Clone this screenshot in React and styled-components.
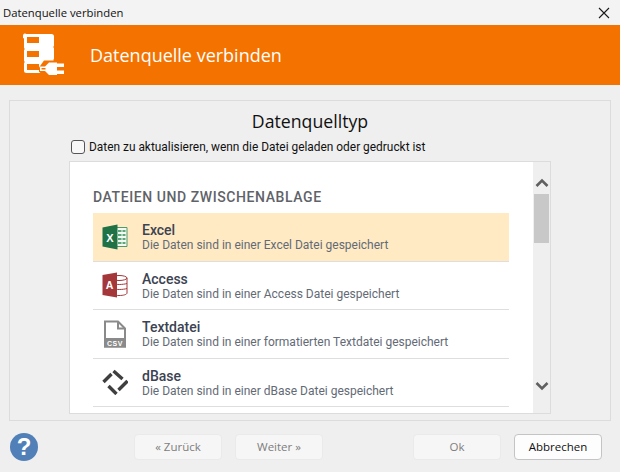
import React from 'react';
import styled, { createGlobalStyle } from 'styled-components';

const GlobalStyle = createGlobalStyle`
  html, body { margin: 0; padding: 0; }
  body { background: #efefef; font-family: Roboto, "Noto Sans", sans-serif; overflow: hidden; }
`;

const sources = [
  { id: 'excel', title: 'Excel', text: 'Die Daten sind in einer Excel Datei gespeichert', selected: true },
  { id: 'access', title: 'Access', text: 'Die Daten sind in einer Access Datei gespeichert' },
  { id: 'text', title: 'Textdatei', text: 'Die Daten sind in einer formatierten Textdatei gespeichert' },
  { id: 'dbase', title: 'dBase', text: 'Die Daten sind in einer dBase Datei gespeichert' },
];

const ExcelIcon = () => (
  <svg width="26" height="26" viewBox="0 0 26 26">
    <path d="M13 3.500h12V22.500H13z" fill="#f4f8f2" stroke="#4f9a6c" />
    <path d="M16 6h3.500v2H16zM20.500 6h3v2h-3zM16 10h3.500v2H16zM20.500 10h3v2h-3zM16 14h3.500v2H16zM20.500 14h3v2h-3zM16 18h3.500v2H16zM20.500 18h3v2h-3z" fill="#5aa77a" />
    <path d="M.5 3.500 15.500 .5v25L.5 22.500z" fill="#1f7246" />
    <text x="8" y="17.500" fill="#fff" fontFamily="Liberation Sans, sans-serif" fontSize="11" fontWeight="700" textAnchor="middle">X</text>
  </svg>
);

const AccessIcon = () => (
  <svg width="26" height="26" viewBox="0 0 26 26">
    <ellipse cx="17" cy="6" rx="8" ry="2.500" fill="#fff" stroke="#a4373a" />
    <path d="M9 6v15c0 1.500 3.500 2.500 8 2.500s8-1 8-2.500V6M11 11.500c2 1.300 10 1.300 14 0M11 16.500c2 1.300 10 1.300 14 0" fill="none" stroke="#a4373a" />
    <path d="M.5 3 15 .5v25L.5 23z" fill="#a4373a" />
    <text x="7.500" y="17" fill="#fff" fontFamily="Liberation Sans, sans-serif" fontSize="10.500" fontWeight="700" textAnchor="middle">A</text>
  </svg>
);

const CsvIcon = () => (
  <svg width="24" height="28" viewBox="0 0 24 28">
    <path d="M2 1.500h13l7 7V26.500H2z" fill="#fff" stroke="#8a8a8a" strokeWidth="2" />
    <path d="M15 1.500v7h7" fill="none" stroke="#8a8a8a" strokeWidth="2" />
    <path d="M1 18h22v9.500H1z" fill="#8a8a8a" />
    <text x="12" y="25.500" fill="#fff" fontFamily="Liberation Sans, sans-serif" fontSize="7" fontWeight="700" letterSpacing=".6" textAnchor="middle">CSV</text>
  </svg>
);

const DbaseIcon = () => (
  <svg width="26" height="26" viewBox="0 0 26 26">
    <path d="M1.500 13 9.500 5M11.500 2 20.500 10M25.500 12 16.500 21M6.500 17 14.500 25" stroke="#3f3f3f" strokeWidth="3.400" fill="none" />
  </svg>
);

const PlugLogo = () => (
  <svg width="44" height="44" viewBox="0 0 44 44">
    <path
      d="M3.500 1h25A2.500 2.500 0 0 1 31 3.500v9a2 2 0 0 1-1 1.500 2 2 0 0 1 1 1.500v10a2 2 0 0 1-1 1.500 2 2 0 0 1 1 1.500V40H3.500A2.500 2.500 0 0 1 1 37.500v-7a2 2 0 0 1 1-1.500 2 2 0 0 1-1-1.500v-10a2 2 0 0 1 1-1.500 2 2 0 0 1-1-1.500v-9A2.500 2.500 0 0 1 3.500 1z"
      fill="#fff"
    />
    <path d="M4 4h12v6H4zM4 18h12v6H4zM4 31h12v6H4z" fill="#f47300" />
    <path d="M16 34.500 21 27.500h16V44H21l-5-5.500z" fill="#f47300" />
    <path d="M17 33.500h5l4-4h8V42h-8l-4-4h-5zM18.500 35v1.500h4v-1.500z" fill="#fff" fillRule="evenodd" />
    <path d="M34 30.500h7v3.500h-7zM34 37.500h7V41h-7z" fill="#fff" />
  </svg>
);

const icons = { excel: <ExcelIcon />, access: <AccessIcon />, text: <CsvIcon />, dbase: <DbaseIcon /> };

const App = () => (
  <>
    <GlobalStyle />
    <Dialog>
      <TitleBar>
        <span>Datenquelle verbinden</span>
        <svg width="12" height="12" viewBox="0 0 12 12">
          <path d="M1 1l10 10M11 1 1 11" stroke="#1a1a1a" strokeWidth="1.100" fill="none" />
        </svg>
      </TitleBar>
      <Banner>
        <PlugLogo />
        <BannerTitle>Datenquelle verbinden</BannerTitle>
      </Banner>
      <Panel>
        <PanelTitle>Datenquelltyp</PanelTitle>
        <CheckRow>
          <CheckBox />
          <span>Daten zu aktualisieren, wenn die Datei geladen oder gedruckt ist</span>
        </CheckRow>
        <ListFrame>
          <ListBody>
            <SectionHead>DATEIEN UND ZWISCHENABLAGE</SectionHead>
            {sources.map((s) => (
              <SourceRow key={s.id} $selected={s.selected}>
                <IconCell>{icons[s.id]}</IconCell>
                <div>
                  <SourceTitle>{s.title}</SourceTitle>
                  <SourceText>{s.text}</SourceText>
                </div>
              </SourceRow>
            ))}
          </ListBody>
          <ScrollBar>
            <svg width="14" height="10" viewBox="0 0 14 10">
              <path d="M1.500 8 7 2.500 12.500 8" fill="none" stroke="#606060" strokeWidth="2.600" />
            </svg>
            <Thumb />
            <svg width="14" height="10" viewBox="0 0 14 10">
              <path d="M1.500 2 7 7.500 12.500 2" fill="none" stroke="#606060" strokeWidth="2.600" />
            </svg>
          </ScrollBar>
        </ListFrame>
      </Panel>
      <Footer>
        <HelpBadge>?</HelpBadge>
        <NavButtons>
          <Button disabled>« Zurück</Button>
          <Button disabled>Weiter »</Button>
        </NavButtons>
        <ActionButtons>
          <Button disabled>Ok</Button>
          <Button>Abbrechen</Button>
        </ActionButtons>
      </Footer>
    </Dialog>
  </>
);

const Dialog = styled.div`
  width: 620px;
  height: 472px;
  display: flex;
  flex-direction: column;
  background: #efefef;
`;

const TitleBar = styled.div`
  height: 25px;
  display: flex;
  align-items: center;
  justify-content: space-between;
  padding: 0 10px 0 3px;
  background: #f3f3f3;
  color: #111;
  font-family: "Open Sans", "Noto Sans", sans-serif;
  font-size: 11.3px;
`;

const Banner = styled.div`
  height: 60px;
  display: flex;
  align-items: center;
  gap: 23px;
  padding-left: 23px;
  background: #f47300;
`;

const BannerTitle = styled.div`
  color: #fff;
  font-family: "Open Sans", "Noto Sans", sans-serif;
  font-size: 18px;
`;

const Panel = styled.div`
  width: 602px;
  height: 321px;
  box-sizing: border-box;
  margin: 15px 0 0 9px;
  display: flex;
  flex-direction: column;
  align-items: center;
  border: 1px solid #dcdcdc;
`;

const PanelTitle = styled.div`
  margin-top: 8px;
  height: 24px;
  line-height: 24px;
  color: #111;
  font-family: "Open Sans", "Noto Sans", sans-serif;
  font-size: 17.7px;
`;

const CheckRow = styled.label`
  width: 480px;
  height: 18px;
  margin-top: 5px;
  display: flex;
  align-items: center;
  gap: 4px;
  color: #111;
  font-family: Roboto, sans-serif;
  font-size: 11.9px;
  padding-left: 2px;
`;

const CheckBox = styled.span`
  width: 12px;
  height: 12px;
  border: 1px solid #555;
  border-radius: 3px;
  background: #f8f8f8;
`;

const ListFrame = styled.div`
  width: 482px;
  height: 253px;
  box-sizing: border-box;
  margin-top: 5px;
  display: flex;
  border: 1px solid #dcdcdc;
  background: #fff;
`;

const ListBody = styled.div`
  flex: 1;
  padding: 0 24px 0 23px;
  overflow: hidden;
`;

const SectionHead = styled.div`
  height: 51px;
  box-sizing: border-box;
  padding-top: 27px;
  line-height: 16px;
  color: #5f6368;
  font-size: 14px;
  font-weight: 500;
  letter-spacing: 0.58px;
`;

const SourceRow = styled.div`
  height: 48.5px;
  box-sizing: border-box;
  display: flex;
  align-items: center;
  border-bottom: 1.500px solid #dedede;
  background: ${(p) => (p.$selected ? '#ffeac4' : 'transparent')};
`;

const IconCell = styled.div`
  width: 49px;
  display: flex;
  justify-content: center;
  padding-right: 6px;
  box-sizing: border-box;
`;

const SourceTitle = styled.div`
  color: #3c4352;
  font-size: 14px;
  font-weight: 500;
  line-height: 16px;
  margin-top: 2px;
`;

const SourceText = styled.div`
  color: #636a76;
  font-size: 12px;
  line-height: 15px;
`;

const ScrollBar = styled.div`
  width: 17px;
  display: flex;
  flex-direction: column;
  align-items: center;
  padding-top: 16px;
  background: #efefef;
`;

const Thumb = styled.div`
  width: 15px;
  height: 49px;
  margin: 6px 0 138px;
  background: #c8c8c8;
`;

const Footer = styled.div`
  flex: 1;
  display: flex;
  align-items: center;
  padding: 0 18px 0 10px;
  justify-content: space-between;
`;

const HelpBadge = styled.div`
  width: 28px;
  height: 28px;
  border-radius: 50%;
  display: flex;
  align-items: center;
  justify-content: center;
  background: #5180b8;
  color: #fff;
  font-family: "Liberation Sans", sans-serif;
  font-size: 24px;
  font-weight: 700;
`;

const NavButtons = styled.div`
  display: flex;
  gap: 13px;
  margin-left: 96px;
`;

const ActionButtons = styled.div`
  display: flex;
  gap: 13px;
  margin-left: auto;
`;

const Button = styled.button`
  width: 88px;
  height: 26px;
  padding: 0;
  border-radius: 4px;
  border: 1px solid ${(p) => (p.disabled ? '#eaeaea' : '#c4c4c4')};
  background: ${(p) => (p.disabled ? '#f6f6f6' : '#fdfdfd')};
  color: ${(p) => (p.disabled ? '#7d7d7d' : '#111')};
  font-family: "Open Sans", "Noto Sans", sans-serif;
  font-size: 11.5px;
`;

export default App;
